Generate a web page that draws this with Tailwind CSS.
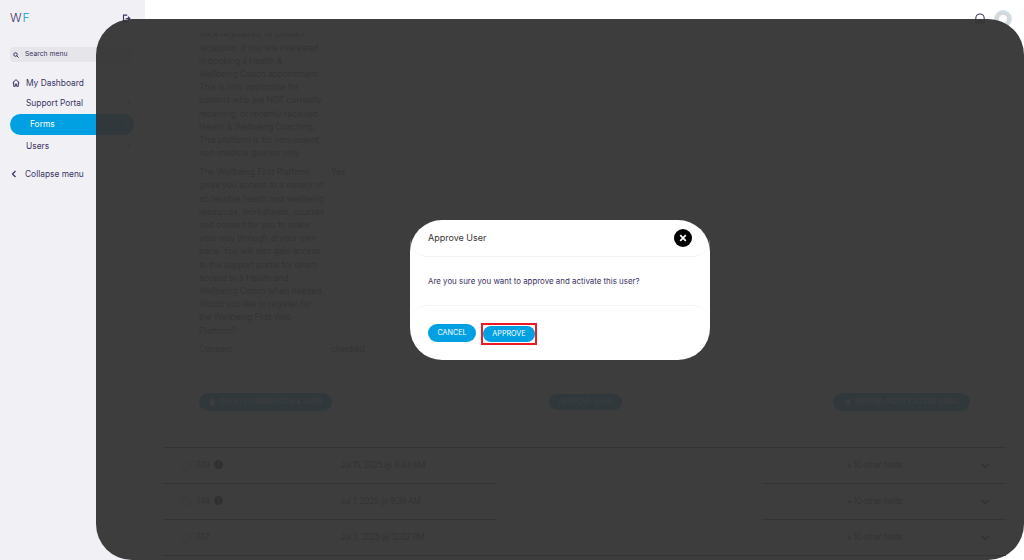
<!DOCTYPE html>
<html lang="en">
<head>
  <meta charset="UTF-8">
  <title>Approve User</title>
  <script src="https://cdn.jsdelivr.net/npm/@tailwindcss/browser@4"></script>
</head>
<body class="relative h-[560px] w-[1024px] overflow-hidden bg-white font-['Inter','Liberation_Sans',sans-serif] text-[#3b3163]">

  <div class="flex h-[560px]">
    <!-- Sidebar -->
    <aside class="w-[145px] shrink-0 bg-[#f1f1f5]">
      <div class="flex items-center justify-between pl-[10px] pr-[14px] h-[36px]">
        <span class="text-[12px] font-light tracking-[1px]">W<span class="text-[#00a0e3]">F</span></span>
        <svg class="w-[9px] h-[9px]" viewBox="0 0 24 24" fill="none" stroke="#3b3163" stroke-width="3"><path d="M14 3H4v18h10M10 12h11M16 7l5 5-5 5"/></svg>
      </div>
      <div class="mt-[11px] mx-[10px] h-[15px] w-[122px] rounded-[4px] bg-[#e6e6ea] flex items-center pl-[3px] gap-[6px] text-[6.8px]">
        <svg class="w-[6px] h-[6px]" viewBox="0 0 24 24" fill="none" stroke="#3b3163" stroke-width="4"><circle cx="10" cy="10" r="7"/><path d="M15 15l7 7"/></svg>
        <span>Search menu</span>
      </div>
      <nav class="mt-[11px] text-[8.4px]">
        <div class="flex items-center h-[20px] pl-[12px] gap-[6px]">
          <svg class="w-[8px] h-[8px]" viewBox="0 0 24 24" fill="none" stroke="#3b3163" stroke-width="3"><path d="M2 11l10-9 10 9M5 9v13h5v-7h4v7h5V9"/></svg>
          <span>My Dashboard</span>
        </div>
        <div class="flex items-center justify-between h-[20px] pl-[26px] pr-[15px]">Support Portal <span class="text-[7px]">›</span></div>
        <div class="flex items-center justify-between h-[21px] ml-[10px] w-[124px] mt-px rounded-full bg-[#00a0e3] pl-[20px] pr-[5px] text-white">Forms <span class="text-[7px]">›</span></div>
        <div class="flex items-center justify-between h-[21px] mt-px pl-[26px] pr-[15px]">Users <span class="text-[7px]">›</span></div>
        <div class="flex items-center h-[20px] pl-[11px] gap-[8px] mt-[7px]">
          <svg class="w-[6px] h-[8px]" viewBox="0 0 12 16" fill="none" stroke="#3b3163" stroke-width="2.5"><path d="M9 2L3 8l6 6"/></svg>
          <span>Collapse menu</span>
        </div>
      </nav>
    </aside>

    <main class="flex-1 min-w-0 flex flex-col h-[560px] overflow-hidden">
      <!-- Top bar -->
      <div class="relative z-10 h-[33px] shrink-0 bg-white flex items-start justify-end gap-[9px] pr-[12px] pt-[10px]">
        <svg class="w-[10px] h-[11px] mt-[3px]" viewBox="0 0 24 26" fill="none" stroke="#3b3163" stroke-width="2.5"><path d="M12 2a10 10 0 0 1 10 10v12H2V12A10 10 0 0 1 12 2zM9 24v-8h6v8"/></svg>
        <div class="w-[18px] h-[18px] rounded-full bg-[#d5d9dc] border border-[#cfe8f2] flex items-center justify-center">
          <div class="w-[8px] h-[8px] rounded-full bg-white"></div>
        </div>
      </div>

      <!-- Form answers, scrolled so the first line sits under the top bar -->
      <div class="pl-[54px] text-[8.5px] tracking-[-0.1px] leading-[13.2px] -mt-[4.6px] whitespace-nowrap">
        <p>once registered, or contact<br>reception, if you are interested<br>in booking a Health &amp;<br>Wellbeing Coach appointment.<br>This is only applicable for<br>patients who are NOT currently<br>receiving, or recently received<br>Health &amp; Wellbeing Coaching.<br>This platform is for non-urgent,<br>non-medical queries only.</p>
        <div class="flex mt-[5.7px]">
          <p class="w-[132px]">The Wellbeing First Platform<br>gives you access to a variety of<br>accessible health and wellbeing<br>resources, worksheets, courses<br>and content for you to make<br>your way through at your own<br>pace. You will also gain access<br>to the support portal for direct<br>access to a Health and<br>Wellbeing Coach when needed.<br>Would you like to register for<br>the Wellbeing First Web<br>Platform?</p>
          <span>Yes</span>
        </div>
        <div class="flex mt-[5.7px]">
          <span class="w-[132px]">Consent</span>
          <span>checked</span>
        </div>
      </div>

      <div class="mt-[36.4px] mx-[54px] flex items-center justify-between text-[7.2px] text-white whitespace-nowrap">
        <button class="h-[18px] w-[133px] rounded-full bg-[#00a0e3] flex items-center justify-center gap-[4px]">
          <svg class="w-[7px] h-[8px]" viewBox="0 0 14 16" fill="#fff"><path d="M1 3h12v2H1zM5 1h4v2H5zM2 6h10l-1 10H3z"/></svg>
          DELETE SUBMISSION &amp; USER
        </button>
        <button class="ml-[6px] h-[16px] w-[73px] rounded-full bg-[#00a0e3]">APPROVE USER</button>
        <button class="h-[18px] w-[137px] rounded-full bg-[#00a0e3] flex items-center justify-center gap-[4px]">
          <svg class="w-[8px] h-[8px]" viewBox="0 0 16 16" fill="#fff"><path d="M15 1L1 8l4 2 7-6-5 7v4l3-3 3 2z"/></svg>
          RESEND NOTIFICATION EMAIL
        </button>
      </div>

      <!-- Submissions -->
      <div class="mt-[36px] ml-[18px] w-[843px] border-t border-[#555] text-[8.5px] tracking-[-0.5px] whitespace-nowrap">
        <div class="flex h-[36px]">
          <div class="w-[334px] flex items-center pl-[18px] border-b border-[#555]">
            <div class="w-[159px] flex items-center">
              <span class="w-[10px] h-[10px] rounded-full border border-[#888]"></span>
              <span class="ml-[5px] w-[15px]">749</span>
              <span class="ml-[3px] w-[9px] h-[9px] rounded-full bg-[#111] -mt-[2px] flex items-center justify-center text-[6px] text-white">!</span>
            </div>
            <span>Jul 15, 2025 @ 8:43 AM</span>
          </div>
          <div class="w-[265px]"></div>
          <div class="flex-1 flex items-center justify-between pl-[85px] pr-[17px] border-b border-[#555]">
            <span>• 10 other fields</span>
            <svg class="w-[8px] h-[6px]" viewBox="0 0 12 8" fill="none" stroke="#222" stroke-width="2.5"><path d="M1 1l5 5 5-5"/></svg>
          </div>
        </div>
        <div class="flex h-[36px]">
          <div class="w-[334px] flex items-center pl-[18px] border-b border-[#555]">
            <div class="w-[159px] flex items-center">
              <span class="w-[10px] h-[10px] rounded-full border border-[#888]"></span>
              <span class="ml-[5px] w-[15px]">748</span>
              <span class="ml-[3px] w-[9px] h-[9px] rounded-full bg-[#111] -mt-[2px] flex items-center justify-center text-[6px] text-white">!</span>
            </div>
            <span>Jul 7, 2025 @ 9:39 AM</span>
          </div>
          <div class="w-[265px]"></div>
          <div class="flex-1 flex items-center justify-between pl-[85px] pr-[17px] border-b border-[#555]">
            <span>• 10 other fields</span>
            <svg class="w-[8px] h-[6px]" viewBox="0 0 12 8" fill="none" stroke="#222" stroke-width="2.5"><path d="M1 1l5 5 5-5"/></svg>
          </div>
        </div>
        <div class="flex items-center justify-between h-[36px] pl-[18px] pr-[17px] border-b border-[#555]">
          <div class="flex items-center">
            <div class="w-[159px] flex items-center">
              <span class="w-[10px] h-[10px] rounded-full border border-[#888]"></span>
              <span class="ml-[5px] w-[15px]">747</span>
            </div>
            <span>Jul 3, 2025 @ 12:02 PM</span>
          </div>
          <div class="flex items-center w-[142px] justify-between">
            <span>• 10 other fields</span>
            <svg class="w-[8px] h-[6px]" viewBox="0 0 12 8" fill="none" stroke="#222" stroke-width="2.5"><path d="M1 1l5 5 5-5"/></svg>
          </div>
        </div>
      </div>
    </main>
  </div>

  <!-- Modal backdrop -->
  <div class="absolute z-20 left-[96px] top-[19px] w-[928px] h-[541px] rounded-[36px] bg-[#333333]/95"></div>

  <!-- Modal -->
  <div class="absolute z-30 left-[410px] top-[220px] w-[300px] h-[140px] rounded-[32px] bg-white flex flex-col">
    <div class="h-[37px] flex items-center justify-between px-[18px] rounded-b-[18px] border-b border-[#f3f3f6] text-[9px] text-[#333]">
      <span>Approve User</span>
      <span class="w-[18px] h-[18px] rounded-full bg-black flex items-center justify-center">
        <svg class="w-[8px] h-[8px]" viewBox="0 0 10 10" fill="none" stroke="#fff" stroke-width="2.2"><path d="M1.5 1.5l7 7M8.5 1.5l-7 7"/></svg>
      </span>
    </div>
    <p class="h-[48px] flex items-center pl-[18px] pt-px text-[7.9px]">Are you sure you want to approve and activate this user?</p>
    <div class="flex-1 rounded-t-[18px] border-t border-[#f3f3f6] flex items-start pl-[18px] pt-[18px] gap-[5px] text-[7.2px] text-white">
      <button class="h-[18px] w-[48px] rounded-full bg-[#00a0e3]">CANCEL</button>
      <span class="border-2 border-[#ed1c24] -mt-px">
        <button class="block h-[16px] w-[52px] my-px rounded-full bg-[#00a0e3]">APPROVE</button>
      </span>
    </div>
  </div>
</body>
</html>
